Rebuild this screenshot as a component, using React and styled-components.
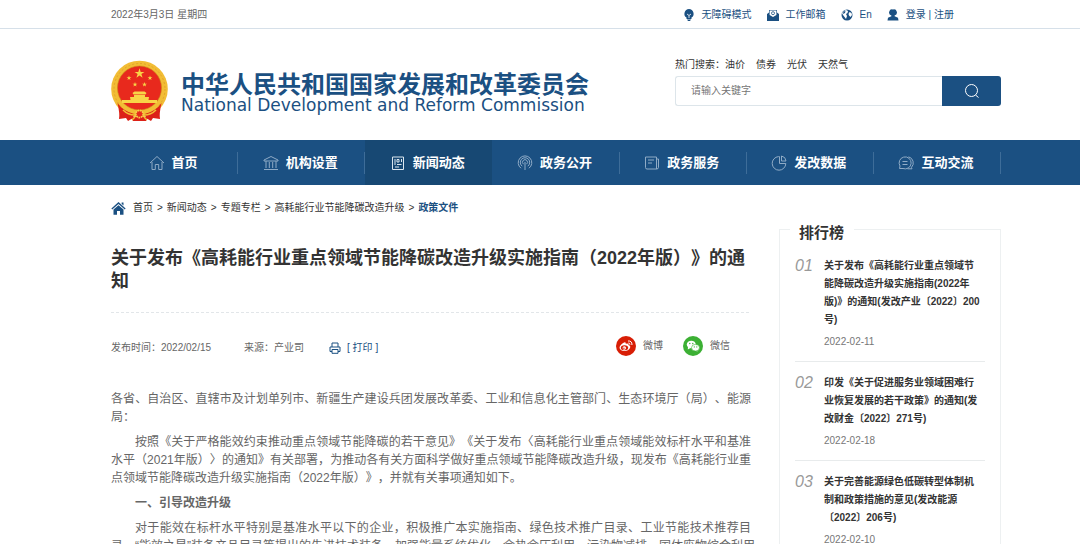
import React from 'react';
import styled, { createGlobalStyle, css } from 'styled-components';

const GlobalStyle = createGlobalStyle`
  * { box-sizing: border-box; }
  body {
    margin: 0;
    background: #fff;
    color: #666;
    font: 10px/18px "Liberation Sans", Arial, "Noto Sans CJK SC", sans-serif;
    text-spacing-trim: space-all;
  }
  a { color: inherit; text-decoration: none; }
  h1, h2, h3, p, ol, ul { margin: 0; padding: 0; list-style: none; }
`;

const wrap = css`
  padding-left: 111px;
  padding-right: 79px;
`;

const TopBar = styled.div`
  ${wrap}
  display: flex;
  align-items: center;
  justify-content: space-between;
  height: 29px;
  padding-top: 1px;
  border-bottom: 1px solid #d6e0e9;
`;

const TopLinks = styled.div`
  display: flex;
  align-items: center;
  gap: 15px;
  margin-right: 47px;
  color: #1b5082;
`;

const TopLink = styled.a`
  display: flex;
  align-items: center;
  gap: 7px;
`;

const Header = styled.header`
  ${wrap}
  display: flex;
  justify-content: space-between;
  height: 111px;
`;

const Brand = styled.a`
  display: flex;
  gap: 13px;
  padding-top: 31px;
  color: #1b5082;
`;

const BrandName = styled.div`
  padding-top: 13px;
  font-size: 24px;
  line-height: 24px;
  font-weight: bold;
  white-space: nowrap;
`;

const BrandEnglish = styled.div`
  font: 17px/16px "DejaVu Sans", sans-serif;
  white-space: nowrap;
`;

const SearchArea = styled.div`
  width: 326px;
  padding-top: 27px;
`;

const HotWords = styled.div`
  display: flex;
  gap: 11px;
  color: #333;
`;

const SearchForm = styled.form`
  display: flex;
  height: 30px;
  margin-top: 2px;
`;

const SearchInput = styled.input`
  flex: 1;
  min-width: 0;
  border: 1px solid #dde5ea;
  border-right: 0;
  border-radius: 3px 0 0 3px;
  padding: 0 15px;
  font: inherit;
  outline: none;
  &::placeholder { color: #757575; }
`;

const SearchButton = styled.button`
  display: flex;
  align-items: center;
  justify-content: center;
  width: 59px;
  border: 0;
  border-radius: 0 3px 3px 0;
  background: #1b5082;
  color: #fff;
`;

const Nav = styled.nav`
  ${wrap}
  display: flex;
  height: 45px;
  background: #1b5082;
`;

const NavItem = styled.a`
  flex: 1;
  display: flex;
  align-items: center;
  justify-content: center;
  gap: 7px;
  padding-right: 3px;
  color: #fff;
  font-size: 13px;
  font-weight: bold;
  background: ${({ $active }) => ($active
    ? '#174873'
    : 'linear-gradient(#3e6d99, #3e6d99) right center / 1px 22px no-repeat')};
  svg { color: #8fabc6; }
`;

const Main = styled.main`
  ${wrap}
  display: flex;
  align-items: flex-start;
  gap: 30px;
`;

const Article = styled.article`
  flex: 1;
  min-width: 0;
`;

const Crumbs = styled.div`
  display: flex;
  align-items: center;
  gap: 4px;
  padding-top: 14px;
  color: #333;
  svg { margin-right: 3px; color: #1b5082; }
  strong { color: #1b5082; }
`;

const Title = styled.h1`
  margin-top: 30px;
  padding-bottom: 19px;
  border-bottom: 1px dashed #e2e6e9;
  color: #333;
  font-size: 18px;
  line-height: 23px;
`;

const Meta = styled.div`
  display: flex;
  align-items: center;
  height: 20px;
  margin: 25px 0 32px;
`;

const Source = styled.span`
  margin: 0 25px 0 33px;
`;

const PrintButton = styled.button`
  display: flex;
  align-items: center;
  gap: 6px;
  padding: 0;
  border: 0;
  background: none;
  color: #1b5082;
  font: inherit;
`;

const Share = styled.div`
  display: flex;
  gap: 20px;
  margin: 0 19px 4px auto;
  a { display: flex; align-items: center; gap: 7px; }
`;

const Content = styled.div`
  margin-right: -2px;
  font-size: 12px;
  text-align: justify;
  p { margin-bottom: 7px; text-indent: 24px; }
  p:first-child { text-indent: 0; }
`;

const NoWrap = styled.span`
  white-space: nowrap;
`;

const Ranking = styled.aside`
  width: 222px;
  margin-top: 44px;
  padding: 0 15px;
  border: 1px solid #edf0f1;
`;

const RankingTitle = styled.h2`
  width: 64px;
  margin: -9px 0 0 -5px;
  padding-left: 9px;
  background: #fff;
  color: #333;
  font-size: 15px;
  line-height: 24px;
  white-space: nowrap;
`;

const RankItem = styled.li`
  display: grid;
  grid-template-columns: 29px 1fr;
  padding: 12px 0 10px;
  border-bottom: 1px solid #e8ebec;
`;

const RankNumber = styled.span`
  color: #999;
  font-size: 16px;
  font-style: italic;
`;

const RankLink = styled.a`
  display: block;
  margin-bottom: 4px;
  color: #333;
  font-weight: bold;
  white-space: pre-line;
`;

const RankDate = styled.time`
  color: #777;
`;

const Line = ({ size = 16, width = 1, children }) => (
  <svg width={size} height={size} viewBox="0 0 16 16" fill="none" stroke="currentColor" strokeWidth={width} aria-hidden="true">
    {children}
  </svg>
);

const Solid = ({ size = 12, children }) => (
  <svg width={size} height={size} viewBox="0 0 12 12" fill="currentColor" aria-hidden="true">
    {children}
  </svg>
);

const Star = ({ x, y, r }) => (
  <path
    transform={`translate(${x} ${y}) scale(${r})`}
    d="M0-1 .23-.31.95-.31.36.12.59.81 0 .38-.59.81-.36.12-.95-.31-.23-.31Z"
  />
);

const Emblem = () => (
  <svg width="57" height="62" viewBox="0 0 57 62" aria-hidden="true">
    <circle cx="28.5" cy="29" r="28.3" fill="#f2bd35" />
    <circle cx="28.5" cy="29" r="25.5" fill="none" stroke="#e2a52a" strokeWidth="1" strokeDasharray="2 2" />
    <circle cx="28.5" cy="28" r="22" fill="#e8291d" stroke="#c98319" strokeWidth=".6" />
    <g fill="#f8d447">
      <Star x={28.5} y={13.5} r={5.2} />
      <Star x={18} y={18} r={2.6} />
      <Star x={39} y={18} r={2.6} />
      <Star x={24} y={24.5} r={2.6} />
      <Star x={33.5} y={24.5} r={2.6} />
      <path d="M21.500 33 23.500 31.500H33.500L35.500 33 34.500 34.500H22.500ZM23 35H34V37H38L37.500 40H46V43H11V40H19.500L19 37H23Z" />
    </g>
    <path d="M10 44Q19 51 28.500 51T47 44L46 48Q39 54 28.500 54T11 48Z" fill="#f2bd35" />
    <path d="M6.500 43Q12 51 23 54L22 58 17 61 15 58 8 59Q9 54 6.500 43ZM50.500 43Q45 51 34 54L35 58 40 61 42 58 49 59Q48 54 50.500 43Z" fill="#dc2118" />
    <path d="M20 57H37L35 61H22Z" fill="#dc2118" />
    <circle cx="28.500" cy="54" r="3.600" fill="#e8291d" stroke="#f6cf49" strokeWidth="1.600" strokeDasharray="1.800 .600" />
    <path d="M12 50Q17 55 24 55M45 50Q40 55 33 55M21 60 24 57M36 60 33 57" fill="none" stroke="#f2bd35" strokeWidth="1.500" />
  </svg>
);

const navItems = [
  ['首页', <path d="M1 8 8 1.5 15 8M3 7V14.5H6.3V9.5H9.7V14.5H13V7" />],
  ['机构设置', <path d="M1 5 8 1.5 15 5V6H1ZM3 6V13M6.300 7V13M9.700 7V13M13 6V13M1 14.5H15" />],
  ['新闻动态', <path d="M2.5 2H13.500V14.5H2.5ZM5 4V10M7 4.5H9V7H7ZM11.500 4V7M7 9.5H11.500M5 12H9" stroke="#dbe6ef" />],
  ['政务公开', <path d="M4 13.2A6.8 6.8 0 1 1 12 13.2M5.2 11.2A4.7 4.7 0 1 1 10.8 11.2M6.5 9.2A2.5 2.5 0 1 1 9.5 9.2M8 7V15" />],
  ['政务服务', <path d="M1.5 2H12.5V14H3Q1.5 14 1.5 12.5ZM12.5 4H14.5V12.5Q14.5 14 12.5 14M4 5H10M4 8H8" />],
  ['发改数据', <path d="M7.500 1.6A6.8 6.8 0 1 0 14.8 8.500H8.500V1.600ZM10.500 1V6H15A5.500 5.500 0 0 0 10.500 1Z" />],
  ['互动交流', <path d="M1.500 13.500 2 11A6 6 0 1 1 5 13.500ZM10.500 1.8A6.300 6.300 0 0 1 13.500 12.300L14 13.800H9.500M4.5 6.5H9.5M4.5 9.5H9.5" />],
];

const crumbs = ['首页', '新闻动态', '专题专栏', '高耗能行业节能降碳改造升级'];

const ranking = [
  ['01', '关于发布《高耗能行业重点领域节\n能降碳改造升级实施指南(2022年\n版)》的通知(发改产业〔2022〕200\n号)', '2022-02-11'],
  ['02', '印发《关于促进服务业领域困难行\n业恢复发展的若干政策》的通知(发\n改财金〔2022〕271号)', '2022-02-18'],
  ['03', '关于完善能源绿色低碳转型体制机\n制和政策措施的意见(发改能源\n〔2022〕206号)', '2022-02-10'],
];

const App = () => (
  <>
    <GlobalStyle />
    <TopBar>
      <span>2022年3月3日 星期四</span>
      <TopLinks>
        <TopLink href="#">
          <Solid>
            <path d="M6 0a4.7 4.7 0 0 1 2.5 8.6V10h-5V8.600A4.700 4.700 0 0 1 6 0ZM4 10.500H8L7 12H5Z" />
            <path d="M4 5 6 6.500 8 5M6 6.500V9" stroke="#fff" fill="none" strokeWidth=".8" />
          </Solid>
          无障碍模式
        </TopLink>
        <TopLink href="#">
          <Solid>
            <path d="M0 5 2 3.500V1H10V3.500L12 5V12H0Z" />
            <path d="M2.600 1.600H9.400V6L6 8 2.600 6Z" fill="#fff" />
            <circle cx="6" cy="4.200" r="1.500" fill="none" stroke="#1b5082" strokeWidth=".8" />
          </Solid>
          工作邮箱
        </TopLink>
        <TopLink href="#">
          <Solid>
            <circle cx="6" cy="6" r="5.500" />
            <path d="M5 1 7 2 6.500 4 5 5 6 7 5 10 3.500 8 2 6 1 4 3 2ZM8.500 3 10.500 4 11 6 9.500 8 8 6.500 7.500 5Z" fill="#fff" />
            <path d="M2.500 2.500 4.500 2 4 4 2 5Z" />
          </Solid>
          En
        </TopLink>
        <TopLink href="#">
          <Solid>
            <path d="M6 .500A3 3 0 0 1 7.600 6.500V7.300L11 8.700 11.500 11.500H.500L1 8.700 4.400 7.300V6.500A3 3 0 0 1 6 .500Z" />
          </Solid>
          登录 | 注册
        </TopLink>
      </TopLinks>
    </TopBar>

    <Header>
      <Brand href="#">
        <Emblem />
        <div>
          <BrandName>中华人民共和国国家发展和改革委员会</BrandName>
          <BrandEnglish>National Development and Reform Commission</BrandEnglish>
        </div>
      </Brand>
      <SearchArea>
        <HotWords>
          <span>热门搜索：<a href="#">油价</a></span>
          <a href="#">债券</a>
          <a href="#">光伏</a>
          <a href="#">天然气</a>
        </HotWords>
        <SearchForm onSubmit={(e) => e.preventDefault()}>
          <SearchInput aria-label="搜索" placeholder="请输入关键字" />
          <SearchButton aria-label="搜索">
            <Line>
              <circle cx="7.500" cy="7.500" r="6" />
              <path d="M11.500 12 14.500 14.500" />
            </Line>
          </SearchButton>
        </SearchForm>
      </SearchArea>
    </Header>

    <Nav>
      {navItems.map(([label, icon]) => (
        <NavItem key={label} href="#" $active={label === '新闻动态'}>
          <Line>{icon}</Line>
          {label}
        </NavItem>
      ))}
    </Nav>

    <Main>
      <Article>
        <Crumbs>
          <Solid size={15}>
            <path d="M6 .800 11.700 6 11 6.700 6 2.300 1 6.700 .300 6ZM2 6.800 6 3.300 10 6.800V11H7.200V8H4.800V11H2ZM8.500 1.200H10V3.500L8.500 2.200Z" />
          </Solid>
          {crumbs.map((name) => (
            <React.Fragment key={name}>
              <a href="#">{name}</a>
              <span>&gt;</span>
            </React.Fragment>
          ))}
          <strong>政策文件</strong>
        </Crumbs>
        <Title>关于发布《高耗能行业重点领域节能降碳改造升级实施指南（2022年版）》的通知</Title>
        <Meta>
          <span>发布时间：2022/02/15</span>
          <Source>来源：产业司</Source>
          <PrintButton>
            <Solid>
              <path d="M3 5V1H9V5M3 9.500H1V5H11V9.500H9M3 7.500H9V11.300H3Z" fill="none" stroke="currentColor" />
            </Solid>
            [ 打印 ]
          </PrintButton>
          <Share>
            <a href="#">
              <svg width="20" height="20" viewBox="0 0 20 20" aria-hidden="true">
                <circle cx="10" cy="10" r="10" fill="#d81e06" />
                <path d="M8 6.500Q10 5.500 9.800 7.700 13 6.800 12.500 9 15 9.800 14 12 12.500 15 8.500 15T3.500 12Q3.500 9 8 6.500Z" fill="#fff" />
                <ellipse cx="8.500" cy="11.700" rx="3.700" ry="2.500" fill="#d81e06" />
                <circle cx="8.300" cy="12" r="1.700" fill="#fff" />
                <circle cx="7.900" cy="12.200" r=".7" fill="#d81e06" />
                <path d="M12 5Q16 4.500 16 9M12.300 7Q14 6.800 14 8.700" fill="none" stroke="#fff" />
              </svg>
              微博
            </a>
            <a href="#">
              <svg width="20" height="20" viewBox="0 0 20 20" aria-hidden="true">
                <circle cx="10" cy="10" r="10" fill="#3cb034" />
                <ellipse cx="8.300" cy="8.500" rx="4.500" ry="3.800" fill="#fff" />
                <path d="M5 10.500 4.800 13.500 7.500 12ZM14 13.500 14.500 15.500 11.500 14.500Z" fill="#fff" />
                <ellipse cx="12.500" cy="11.700" rx="4" ry="3.300" fill="#fff" stroke="#3cb034" strokeWidth=".6" />
                <g fill="#3cb034">
                  <circle cx="6.800" cy="7.500" r=".7" />
                  <circle cx="9.800" cy="7.500" r=".7" />
                  <circle cx="11.300" cy="10.900" r=".6" />
                  <circle cx="13.800" cy="10.900" r=".6" />
                </g>
              </svg>
              微信
            </a>
          </Share>
        </Meta>
        <Content>
          <p>各省、自治区、直辖市及计划单列市、新疆生产建设兵团发展改革委、工业和信息化主管部门、生态环境厅（局）、能源局：</p>
          <p>按照《关于严格能效约束推动重点领域节能降碳的若干意见》《关于发布〈高耗能行业重点领域能效标杆水平和基准水平（2021年版）〉的通知》有关部署，为推动各有关方面科学做好重点领域节能降碳改造升级，现发布《高耗能行业重点领域节能降碳改造升级实施指南（2022年版）》，并就有关事项通知如下。</p>
          <p><strong>一、引导改造升级</strong></p>
          <p>对于能效在标杆水平特别是基准水平以下的企业，积极推广本实施指南、绿色技术推广目录、工业节能技术推荐目<NoWrap>录、“能效之星”装备产品目录等提出的先进技术装备，加强能量系统优化、余热余压利用、污染物减排、固体废物综合利用</NoWrap></p>
        </Content>
      </Article>

      <Ranking>
        <RankingTitle>排行榜</RankingTitle>
        <ol>
          {ranking.map(([no, title, date]) => (
            <RankItem key={no}>
              <RankNumber>{no}</RankNumber>
              <div>
                <RankLink href="#">{title}</RankLink>
                <RankDate>{date}</RankDate>
              </div>
            </RankItem>
          ))}
        </ol>
      </Ranking>
    </Main>
  </>
);

export default App;
